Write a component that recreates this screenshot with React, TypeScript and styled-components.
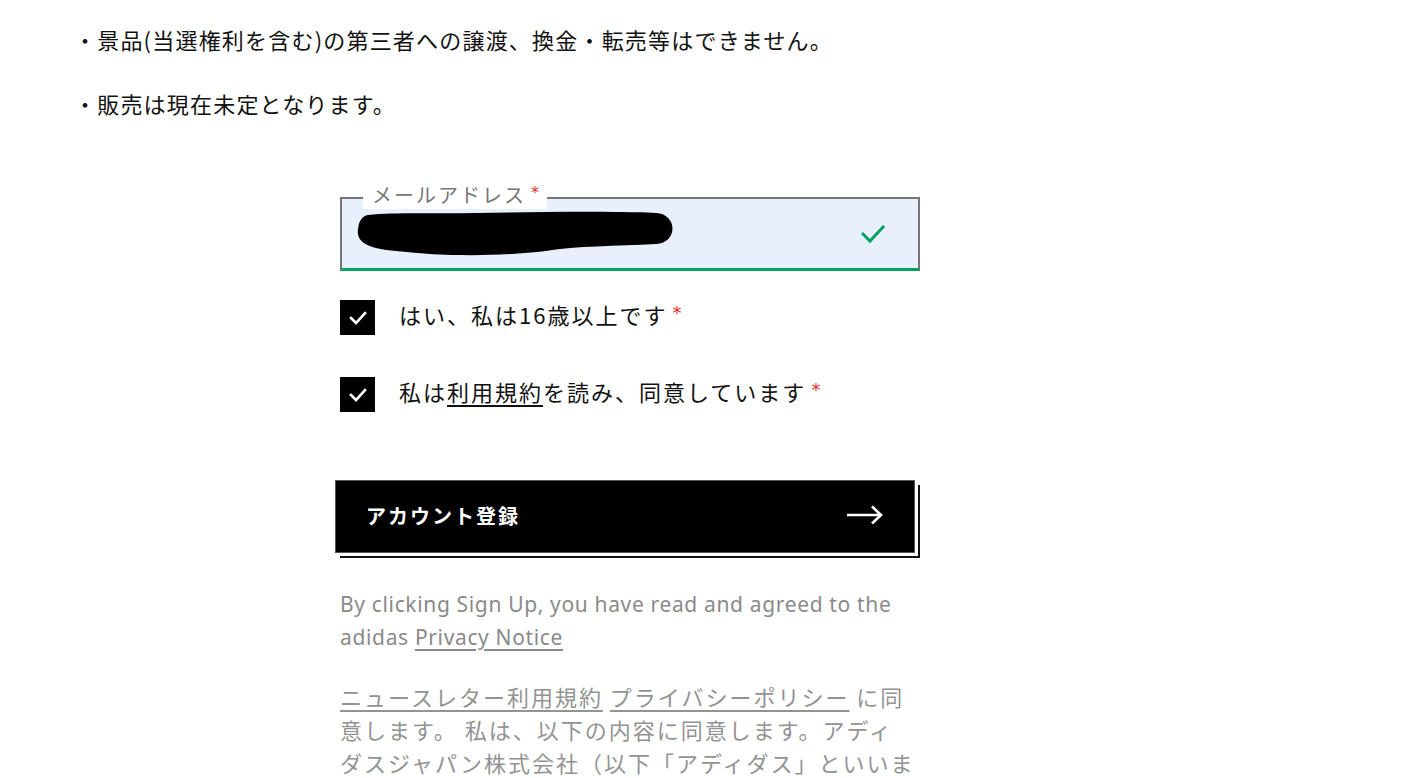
import React from 'react';
import styled, {createGlobalStyle} from 'styled-components';

const Global = createGlobalStyle`
  html, body {
    margin: 0;
    padding: 0;
    background: #fff;
  }
  body {
    font-family: "Noto Sans CJK JP", "Noto Sans", sans-serif;
    color: #000;
  }
`;

const Page = styled.div`
  padding: 23px 0 0 74px;
  width: 1408px;
  height: 778px;
  box-sizing: border-box;
  overflow: hidden;
`;

const Notes = styled.div`
  display: flex;
  flex-direction: column;
  gap: 32px;
`;

const Note = styled.p`
  margin: 0;
  font-size: 22px;
  line-height: 32px;
  letter-spacing: 1.2px;
  color: #111;
`;

const Form = styled.div`
  width: 580px;
  margin: 78px 0 0 266px;
  display: flex;
  flex-direction: column;
`;

const Field = styled.div`
  position: relative;
  height: 74px;
  box-sizing: border-box;
  border: 2px solid #767677;
  border-bottom: 3px solid #00a35f;
  background: #e8f0fe;
  display: flex;
  align-items: center;
  justify-content: space-between;
  padding: 0 33px 0 14px;
`;

const FieldLabel = styled.span`
  position: absolute;
  left: 21px;
  top: -18px;
  background: #fff;
  padding: 0 8px 0 9px;
  font-size: 20px;
  line-height: 28px;
  letter-spacing: 2px;
  color: #767677;
`;

const Star = styled.span<{$small?: boolean}>`
  color: #e32b2b;
  font-family: "DejaVu Sans", sans-serif;
  font-size: ${p => (p.$small ? '16px' : '18px')};
  line-height: 1;
  vertical-align: top;
  position: relative;
  top: ${p => (p.$small ? '4px' : '6px')};
  margin-left: 5px;
  letter-spacing: 0;
`;

const Checks = styled.div`
  display: flex;
  flex-direction: column;
  gap: 42px;
  margin-top: 29px;
`;

const CheckRow = styled.label`
  display: flex;
  align-items: center;
  gap: 24px;
`;

const Box = styled.span`
  width: 35px;
  height: 35px;
  background: #000;
  display: flex;
  align-items: center;
  justify-content: center;
  flex: none;
`;

const CheckText = styled.span`
  font-size: 22px;
  line-height: 32px;
  letter-spacing: 2px;
  color: #111;
  position: relative;
  top: -4px;
`;

const Terms = styled.a`
  color: #111;
  text-decoration: underline;
  text-underline-offset: 4px;
  text-decoration-thickness: 1.5px;
`;

const SignUp = styled.button`
  margin: 68px 0 0 -5px;
  width: 580px;
  height: 73px;
  background: #000;
  border: 1px solid #555;
  box-shadow: 3px 3px 0 0 #fff, 5px 5px 0 0 #111;
  display: flex;
  align-items: center;
  justify-content: space-between;
  padding: 0 30px 3px 30px;
  cursor: pointer;
  font-family: "Noto Sans CJK JP", sans-serif;
  font-weight: 700;
  font-size: 20px;
  letter-spacing: 2px;
  color: #fff;
`;

const Fine = styled.p<{$jp?: boolean}>`
  margin: ${p => (p.$jp ? '26px' : '35px')} 0 0;
  font-family: ${p => (p.$jp ? '"Noto Sans CJK JP", sans-serif' : '"Noto Sans", "Noto Sans CJK JP", sans-serif')};
  font-size: ${p => (p.$jp ? '22px' : '21px')};
  letter-spacing: ${p => (p.$jp ? '2px' : '0.65px')};
  line-height: 33px;
  color: ${p => (p.$jp ? '#939393' : '#8a8a8a')};
  white-space: nowrap;
`;

const FineLink = styled.a`
  color: inherit;
  text-decoration: underline;
  text-underline-offset: 4px;
`;

function Tick({color, width, points, w, h}: {color: string; width: number; points: string; w: number; h: number}) {
  return (
    <svg width={w} height={h} viewBox={`0 0 ${w} ${h}`}>
      <polyline points={points} fill='none' stroke={color} strokeWidth={width} strokeLinecap='square'/>
    </svg>
  );
}

function Redacted() {
  return (
    <svg width='322' height='46' viewBox='0 0 322 46'>
      <path
        d='M12,4 C40,1 80,3 120,2 C180,1 250,0 300,2 C322,3 322,32 300,33 C260,35 220,35 190,40 C150,45 90,46 40,40 C10,38 0,30 2,18 C3,10 6,5 12,4 Z'
        fill='#000'
      />
    </svg>
  );
}

function Arrow() {
  return (
    <svg width='38' height='22' viewBox='0 0 38 22'>
      <line x1='1' y1='11' x2='35' y2='11' stroke='#fff' strokeWidth='2.6'/>
      <polyline points='26,2.5 35,11 26,19.5' fill='none' stroke='#fff' strokeWidth='2.6'/>
    </svg>
  );
}

function App() {
  return (
    <Page>
      <Global/>
      <Notes>
        <Note>・景品(当選権利を含む)の第三者への譲渡、換金・転売等はできません。</Note>
        <Note>・販売は現在未定となります。</Note>
      </Notes>
      <Form>
        <Field>
          <FieldLabel>メールアドレス<Star $small>*</Star></FieldLabel>
          <Redacted/>
          <Tick color='#00a35f' width={3} points='2,10 9,17 22,3' w={24} h={20}/>
        </Field>
        <Checks>
          <CheckRow>
            <Box><Tick color='#fff' width={2.6} points='3,9 8,14 17,4' w={20} h={18}/></Box>
            <CheckText>はい、私は16歳以上です<Star>*</Star></CheckText>
          </CheckRow>
          <CheckRow>
            <Box><Tick color='#fff' width={2.6} points='3,9 8,14 17,4' w={20} h={18}/></Box>
            <CheckText>私は<Terms>利用規約</Terms>を読み、同意しています<Star>*</Star></CheckText>
          </CheckRow>
        </Checks>
        <SignUp>
          <span>アカウント登録</span>
          <Arrow/>
        </SignUp>
        <Fine>
          By clicking Sign Up, you have read and agreed to the<br/>
          adidas <FineLink>Privacy Notice</FineLink>
        </Fine>
        <Fine $jp>
          <FineLink>ニュースレター利用規約</FineLink> <FineLink>プライバシーポリシー</FineLink> に同<br/>
          意します。 私は、以下の内容に同意します。アディ<br/>
          ダスジャパン株式会社（以下「アディダス」といいま
        </Fine>
      </Form>
    </Page>
  );
}

export default App;
